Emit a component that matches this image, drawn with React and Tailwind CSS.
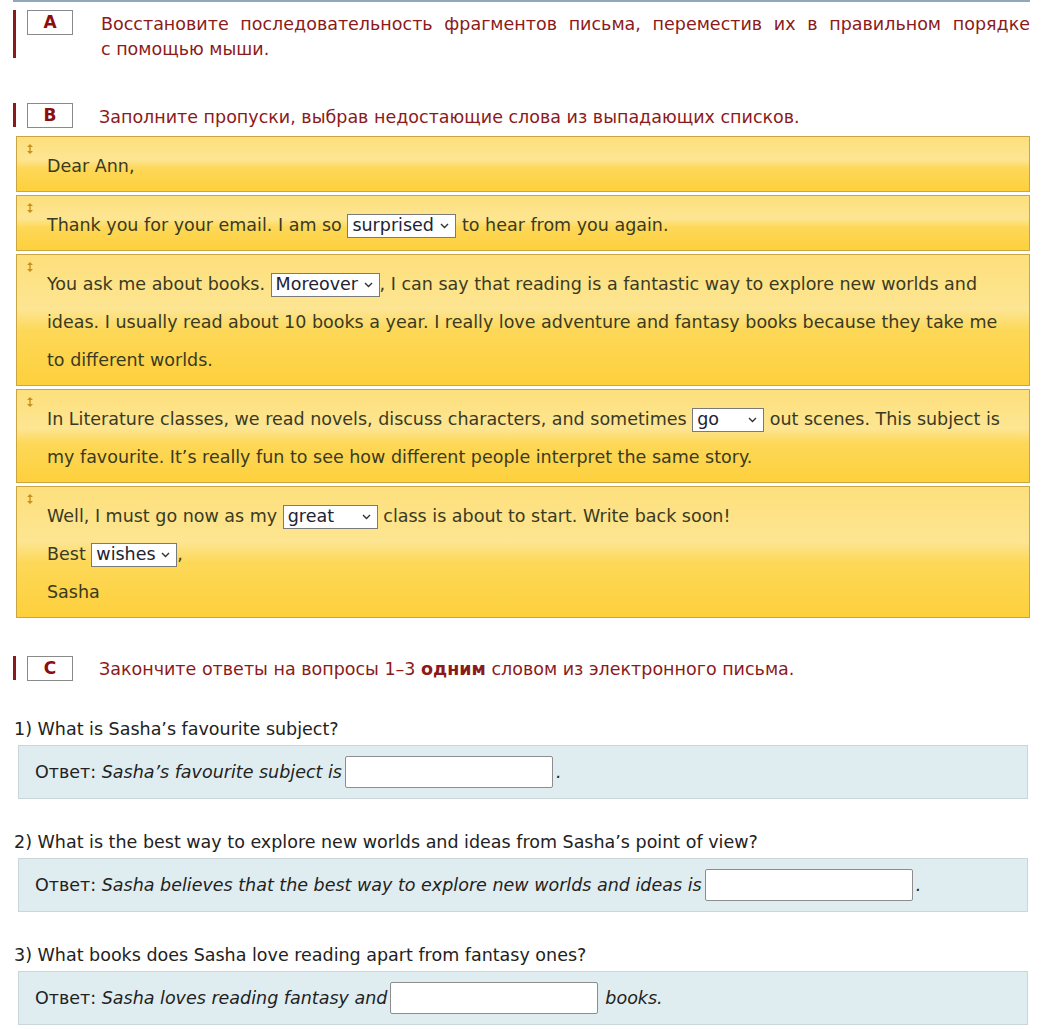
import React from "react"

// small double-headed arrow shown in the corner of each draggable letter part
function DragMark() {
  return (
    <svg width="6" height="10" viewBox="0 0 6 10" className="absolute left-[10px] top-[7px]">
      <path d="M3 0 L6 3 L0 3 Z M3 10 L6 7 L0 7 Z" fill="#c9901c" />
      <rect x="2.3" y="2" width="1.4" height="6" fill="#c9901c" />
    </svg>
  )
}

function Pick({ value, w }) {
  return (
    <span
      className={`inline-flex h-[24px] items-center justify-between border border-[#7a7a7a] bg-white pl-[4px] pr-[6px] align-middle leading-none ${w}`}
    >
      <span className="text-[#223]">{value}</span>
      <svg width="9" height="6" viewBox="0 0 9 6" className="ml-[4px] shrink-0">
        <path d="M1 1 L4.5 4.5 L8 1" stroke="#333" strokeWidth="1.4" fill="none" />
      </svg>
    </span>
  )
}

// lines inside a part are broken by hand, so no wrapping here
function Part({ children }) {
  return (
    <div className="relative whitespace-nowrap border border-[#caa544] bg-[linear-gradient(to_bottom,#fde07c_0%,#fde592_42%,#fdd858_58%,#fdd03c_100%)] pt-[10px] pb-[6px] pl-[30px] pr-[6px] leading-[38px] text-[#3a3a22]">
      <DragMark />
      {children}
    </div>
  )
}

function TaskHead({ letter, barH, children, className = "" }) {
  return (
    <div className={`flex items-start ${className}`}>
      <div className={`w-[3px] bg-[#8b1a1a] ${barH}`} />
      <div className="ml-[11px] flex h-[25px] w-[46px] shrink-0 items-center justify-center border border-[#8a8a8a] bg-white text-[17px] font-bold text-[#8b0d0d]">
        {letter}
      </div>
      {children}
    </div>
  )
}

function Answer({ q, before, after, inputMr = "" }) {
  return (
    <div className="mt-[31px] first:mt-[35px]">
      <div className="ml-px leading-[24px]">{q}</div>
      <div className="ml-[5px] mr-[2px] mt-[4px] flex h-[54px] items-center border border-[#c9d7da] bg-[#dfedf0] px-[16px]">
        <span>Ответ:&nbsp;</span>
        <span className="italic">{before}</span>
        <span className={`mx-[3px] h-[32px] w-[208px] rounded-[2px] border border-[#8d8d8d] bg-white ${inputMr}`} />
        <span className="italic">{after}</span>
      </div>
    </div>
  )
}

export default function App() {
  return (
    <div className="min-h-[1029px] bg-white font-['DejaVu_Sans',sans-serif] text-[16px] text-[#222]">
      <div className="ml-[13px] w-[1017px] border-t-2 border-[#8fa9bb]">
        <TaskHead letter="A" barH="h-[48px]" className="mt-[8px]">
          <div className="mt-[2px] ml-[28px] w-[932px] text-[17.5px] leading-[25px] text-[#8b1a1a]">
            <div className="text-justify [text-align-last:justify]">
              Восстановите последовательность фрагментов письма, переместив их в правильном порядке
            </div>
            <div>с помощью мыши.</div>
          </div>
        </TaskHead>

        <TaskHead letter="B" barH="h-[24px]" className="mt-[41px]">
          <p className="mt-[2px] ml-[26px] text-[17.5px] leading-[25px] text-[#8b1a1a]">
            Заполните пропуски, выбрав недостающие слова из выпадающих списков.
          </p>
        </TaskHead>

        <div className="mt-[6px] ml-[3px] flex flex-col gap-[3px] text-[17.5px]">
          <Part>Dear Ann,</Part>
          <Part>
            Thank you for your email. I am so <Pick value="surprised" w="w-[109px]" /> to hear from you again.
          </Part>
          <Part>
            You ask me about books. <Pick value="Moreover" w="w-[109px]" />, I can say that reading is a fantastic
            way to explore new worlds and
            <br />
            ideas. I usually read about 10 books a year. I really love adventure and fantasy books because they take me
            <br />
            to different worlds.
          </Part>
          <Part>
            In Literature classes, we read novels, discuss characters, and sometimes <Pick value="go" w="w-[72px]" />{" "}
            out scenes. This subject is
            <br />
            my favourite. It’s really fun to see how different people interpret the same story.
          </Part>
          <Part>
            Well, I must go now as my <Pick value="great" w="w-[95px]" /> class is about to start. Write back soon!
            <br />
            Best <Pick value="wishes" w="w-[86px]" />,
            <br />
            Sasha
          </Part>
        </div>

        <TaskHead letter="C" barH="h-[24px]" className="mt-[38px]">
          <p className="mt-px ml-[26px] text-[17.5px] leading-[25px] text-[#8b1a1a]">
            Закончите ответы на вопросы 1–3 <b>одним</b> словом из электронного письма.
          </p>
        </TaskHead>

        <div className="text-[17.5px]">
          <Answer q="1) What is Sasha’s favourite subject?" before="Sasha’s favourite subject is" after="." />
          <Answer
            q="2) What is the best way to explore new worlds and ideas from Sasha’s point of view?"
            before="Sasha believes that the best way to explore new worlds and ideas is"
            after="."
          />
          <Answer
            q="3) What books does Sasha love reading apart from fantasy ones?"
            before="Sasha loves reading fantasy and"
            after="books."
            inputMr="mr-[7px]"
          />
        </div>
      </div>
    </div>
  )
}
